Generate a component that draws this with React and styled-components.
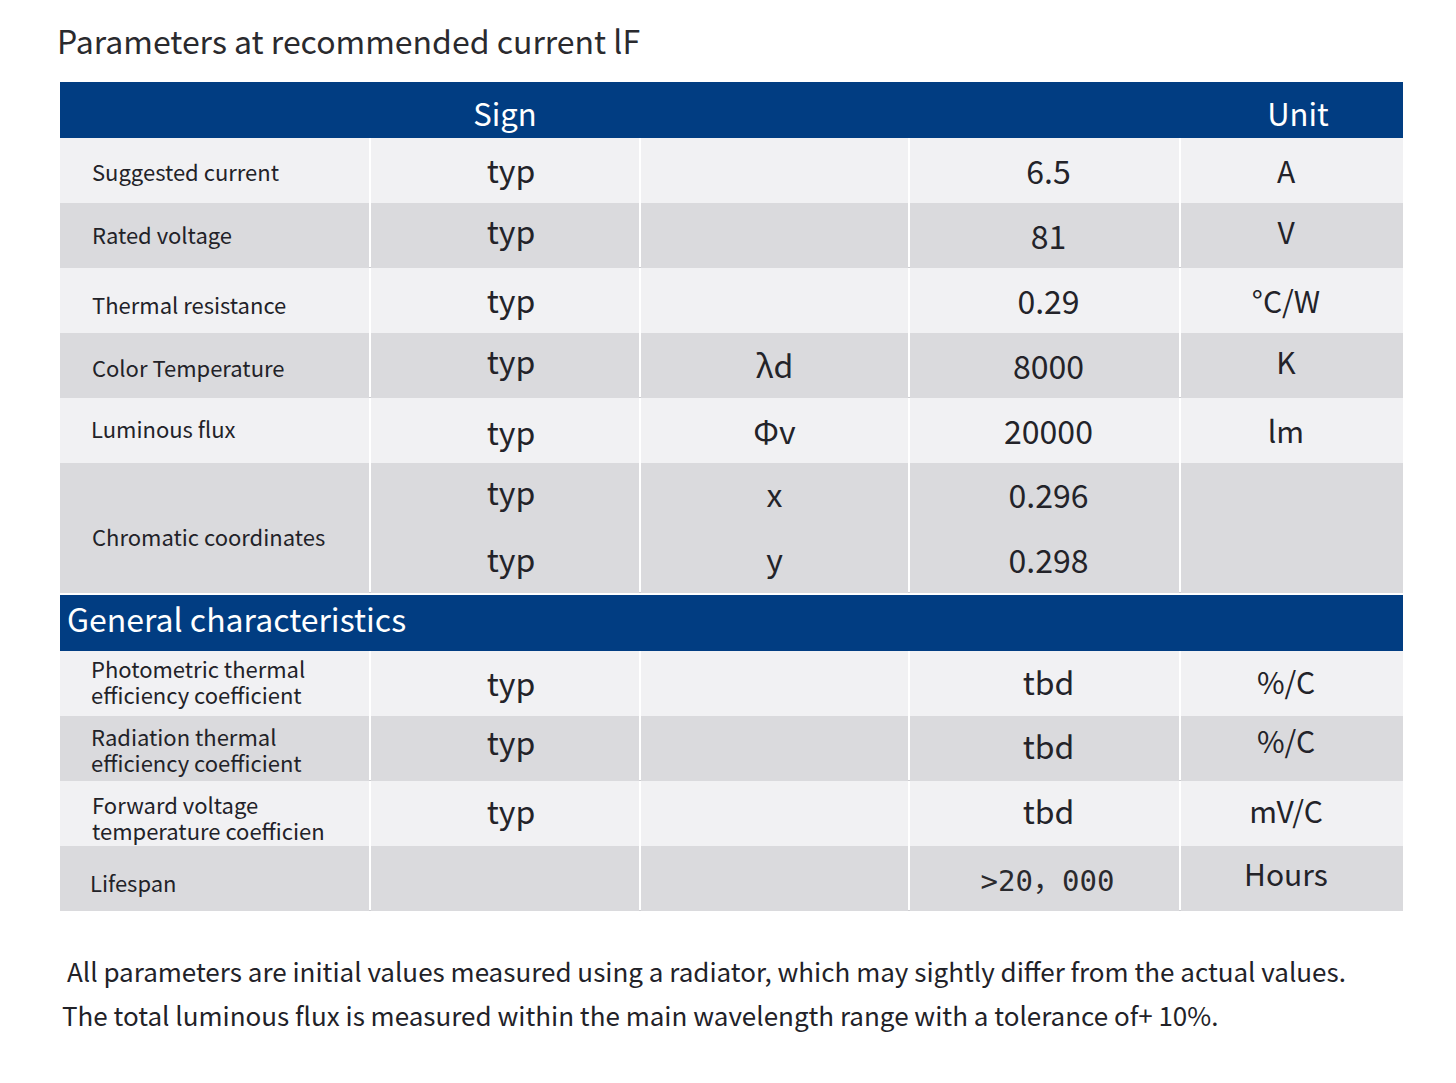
import React from "react";
import styled, { createGlobalStyle } from "styled-components";

const GlobalStyle = createGlobalStyle`
	html, body {
		margin: 0;
		padding: 0;
		background: #ffffff;
	}
	body {
		font-family: "Noto Sans CJK SC", "Noto Sans", sans-serif;
		color: #222228;
	}
`;

const BLUE = "#013d82";
const LIGHT = "#f1f1f3";
const DARK = "#dadadd";

const Page = styled.div`
	padding: 19px 0 40px 60px;
	width: 1343px;
`;

const Title = styled.h2`
	margin: 0 0 21px -3px;
	font-size: 32px;
	line-height: 42px;
	font-weight: 400;
	color: #2a2a2e;
`;

const Table = styled.div`
	display: flex;
	flex-direction: column;
	background: #ffffff;
`;

const HeadBar = styled.div`
	display: grid;
	grid-template-columns: 309px 268px 267px 269px 222px;
	column-gap: 2px;
	height: 56px;
	background: ${BLUE};
	color: #ffffff;
`;

const HeadCell = styled.div`
	display: flex;
	align-items: center;
	justify-content: center;
	padding-top: 4px;
	font-size: 31px;
	grid-column: ${(p) => p.$col};
`;

const Section = styled.div`
	margin-top: 2px;
	height: 56px;
	display: flex;
	align-items: center;
	padding-left: 7px;
	padding-bottom: 10px;
	box-sizing: border-box;
	background: ${BLUE};
	color: #ffffff;
	font-size: 32px;
`;

const Row = styled.div`
	display: grid;
	grid-template-columns: 309px 268px 267px 269px 222px;
	column-gap: 2px;
	height: ${(p) => (p.$double ? 130 : 65)}px;
	box-shadow: ${(p) => (p.$dark ? "inset 0 -1px 0 #cdcdd1" : "none")};

	& > div {
		background: ${(p) => (p.$dark ? DARK : LIGHT)};
	}
`;

const Label = styled.div`
	display: flex;
	align-items: center;
	padding-left: ${(p) => p.$pad || 32}px;
	font-size: 22px;
	line-height: 26px;
	color: #222228;
`;

const LabelText = styled.span`
	position: relative;
	top: ${(p) => p.$dy || 0}px;
`;

const Cell = styled.div`
	display: flex;
	flex-direction: column;
	justify-content: space-around;
	align-items: center;
`;

const Value = styled.span`
	display: block;
	font-size: ${(p) => (p.$unit ? 30 : 32)}px;
	line-height: 40px;
	color: #232329;
	position: relative;
	top: ${(p) => p.$dy || 0}px;
	left: ${(p) => p.$dx || 0}px;
`;

const Mono = styled(Value)`
	font-family: "DejaVu Sans Mono", "Noto Sans CJK SC", monospace;
	font-size: 29px;
	color: #2a2a2e;
`;

const Notes = styled.div`
	margin-top: 38px;
	font-size: 26px;
	line-height: 44px;
	color: #222228;
`;

const NoteLine = styled.p`
	margin: 0 0 0 ${(p) => p.$indent || 2}px;
`;

const rows = [
	{ label: "Suggested current", sym: "", val: "6.5", unit: "A", dy: [-2, 0, -1, -1] },
	{ label: "Rated voltage", sym: "", val: "81", unit: "V", dark: true, ld: -2, dy: [-6, 0, -1, -5] },
	{ label: "Thermal resistance", sym: "", val: "0.29", unit: "°C/W", ld: 3, dy: [-2, 0, -1, -1] },
	{ label: "Color Temperature", sym: "λd", val: "8000", unit: "K", dark: true, ld: 1, dy: [-6, -2, -1, -5] },
	{ label: "Luminous flux", sym: "Φv", val: "20000", unit: "lm", pad: 31, ld: -3, dy: [0, -1, -1, -1] },
];

const general = [
	{ label: ["Photometric thermal", "efficiency coefficient"], val: "tbd", unit: "%/C", pad: 31, ld: -3, dy: [1, 0, 0] },
	{ label: ["Radiation thermal", "efficiency coefficient"], val: "tbd", unit: "%/C", dark: true, pad: 31, ld: 0, dy: [-5, -1, -6] },
	{ label: ["Forward voltage", "temperature coefficien"], val: "tbd", unit: "mV/C", pad: 32, ld: 3, dy: [-1, -1, -1] },
];

const App = () => {
	return (
		<>
			<GlobalStyle />
			<Page>
				<Title>Parameters at recommended current lF</Title>
				<Table>
					<HeadBar>
						<HeadCell $col={2}>Sign</HeadCell>
						<HeadCell $col={5}>
							<LabelText style={{ left: 6 }}>Unit</LabelText>
						</HeadCell>
					</HeadBar>

					{rows.map((r) => (
						<Row key={r.label} $dark={r.dark}>
							<Label $pad={r.pad}>
								<LabelText $dy={r.ld}>{r.label}</LabelText>
							</Label>
							<Cell>
								<Value $dy={r.dy[0]} $dx={6}>typ</Value>
							</Cell>
							<Cell>
								<Value $dy={r.dy[1]}>{r.sym}</Value>
							</Cell>
							<Cell>
								<Value $dy={r.dy[2]} $dx={4}>{r.val}</Value>
							</Cell>
							<Cell>
								<Value $unit $dy={r.dy[3]} $dx={-6}>{r.unit}</Value>
							</Cell>
						</Row>
					))}

					<Row $double $dark>
						<Label>
							<LabelText $dy={8}>Chromatic coordinates</LabelText>
						</Label>
						<Cell>
							<Value $dy={-5} $dx={6}>typ</Value>
							<Value $dy={-3} $dx={6}>typ</Value>
						</Cell>
						<Cell>
							<Value $dy={-3}>x</Value>
							<Value $dy={-3}>y</Value>
						</Cell>
						<Cell>
							<Value $dy={-2} $dx={4}>0.296</Value>
							<Value $dy={-2} $dx={4}>0.298</Value>
						</Cell>
						<Cell />
					</Row>

					<Section>General characteristics</Section>

					{general.map((r) => (
						<Row key={r.label[0]} $dark={r.dark}>
							<Label $pad={r.pad}>
								<LabelText $dy={r.ld}>
									{r.label[0]}
									<br />
									{r.label[1]}
								</LabelText>
							</Label>
							<Cell>
								<Value $dy={r.dy[0] - 3} $dx={6}>typ</Value>
							</Cell>
							<Cell />
							<Cell>
								<Value $dy={r.dy[1] - 3} $dx={4}>{r.val}</Value>
							</Cell>
							<Cell>
								<Value $unit $dy={r.dy[2] - 3} $dx={-6}>{r.unit}</Value>
							</Cell>
						</Row>
					))}

					<Row $dark>
						<Label $pad={30}>
							<LabelText $dy={3}>Lifespan</LabelText>
						</Label>
						<Cell />
						<Cell />
						<Cell>
							<Mono $dy={2} $dx={3}>&gt;20，000</Mono>
						</Cell>
						<Cell>
							<Value $unit $dy={-6} $dx={-6}>Hours</Value>
						</Cell>
					</Row>
				</Table>

				<Notes>
					<NoteLine $indent={7}>
						All parameters are initial values measured using a radiator, which may sightly differ from the actual values.
					</NoteLine>
					<NoteLine $indent={2}>
						The total luminous flux is measured within the main wavelength range with a tolerance of+ 10%.
					</NoteLine>
				</Notes>
			</Page>
		</>
	);
};

export default App;
